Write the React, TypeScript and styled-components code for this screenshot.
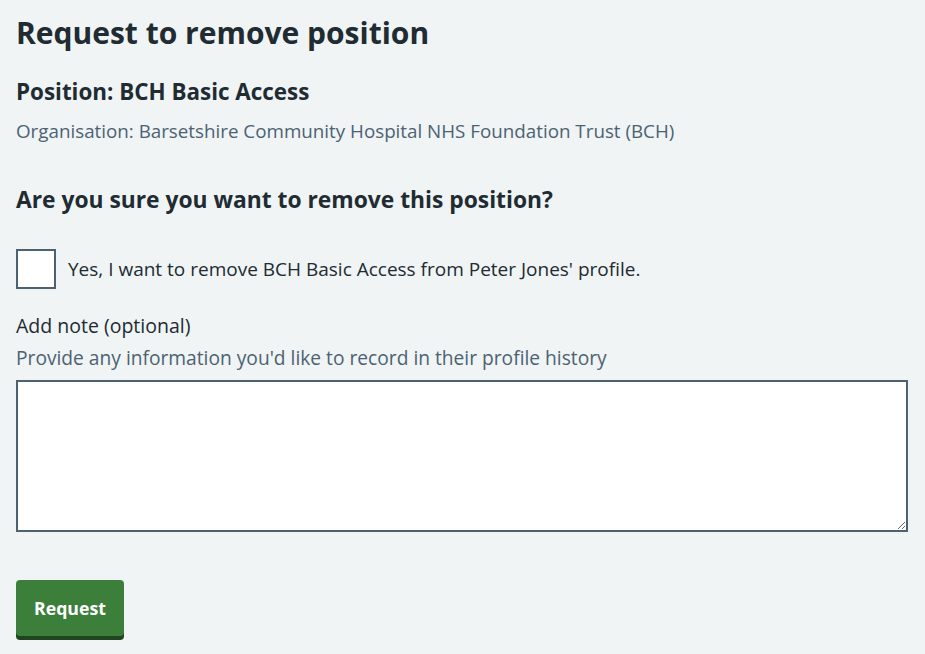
import styled, { createGlobalStyle } from "styled-components"

const GlobalStyle = createGlobalStyle`
body {
    margin: 0;
    background-color: #f0f4f5;
    font-family: "Open Sans", "Noto Sans", sans-serif;
    color: #212b32;
}
`

const App = () => {

    return (
        <Page>
            <GlobalStyle />
            <Heading>Request to remove position</Heading>
            <SubHeading>Position: BCH Basic Access</SubHeading>
            <Secondary>Organisation: Barsetshire Community Hospital NHS Foundation Trust (BCH)</Secondary>

            <Question>Are you sure you want to remove this position?</Question>

            <CheckRow>
                <CheckBox type="checkbox" id="confirm" />
                <CheckLabel htmlFor="confirm">Yes, I want to remove BCH Basic Access from Peter Jones' profile.</CheckLabel>
            </CheckRow>

            <Field>
                <FieldLabel htmlFor="note">Add note (optional)</FieldLabel>
                <Hint>Provide any information you'd like to record in their profile history</Hint>
                <TextArea id="note" />
            </Field>

            <Button>Request</Button>
        </Page>
    )
}

const Page = styled.div`
padding: 15px 17px 16px 16px;
display: flex;
flex-direction: column;
align-items: flex-start;
`

const Heading = styled.h1`
font-size: 30px;
font-weight: 700;
line-height: 36px;
margin: 0 0 27px 0;
`

const SubHeading = styled.h2`
font-size: 22.4px;
font-weight: 700;
line-height: 28px;
margin: 0 0 13px 0;
`

const Secondary = styled.p`
font-size: 18.8px;
line-height: 24px;
color: #4c6272;
margin: 0 0 43px 0;
`

const Question = styled.h3`
font-size: 22.8px;
font-weight: 700;
line-height: 28px;
margin: 0 0 35px 0;
`

const CheckRow = styled.div`
display: flex;
align-items: center;
gap: 12px;
margin-bottom: 25px;
`

const CheckBox = styled.input`
appearance: none;
width: 40px;
height: 40px;
margin: 0;
border: 2px solid #4c6272;
background-color: #ffffff;
box-sizing: border-box;
`

const CheckLabel = styled.label`
font-size: 19px;
line-height: 24px;
`

const Field = styled.div`
display: flex;
flex-direction: column;
align-self: stretch;
margin-bottom: 48px;
`

const FieldLabel = styled.label`
font-size: 19.5px;
line-height: 24px;
margin-bottom: 8px;
`

const Hint = styled.span`
font-size: 19.2px;
line-height: 24px;
color: #4c6272;
margin-bottom: 10px;
`

const TextArea = styled.textarea`
height: 152px;
box-sizing: border-box;
border: 2px solid #4c6272;
background-color: #ffffff;
border-radius: 0;
font-family: inherit;
font-size: 19px;
`

const Button = styled.button`
background-color: #3b7f3b;
color: #ffffff;
font-family: inherit;
font-size: 17.7px;
font-weight: 700;
border: none;
border-radius: 4px;
padding: 0 18px;
height: 56px;
box-shadow: 0 4px 0 #1f451f;
`

export default App;
